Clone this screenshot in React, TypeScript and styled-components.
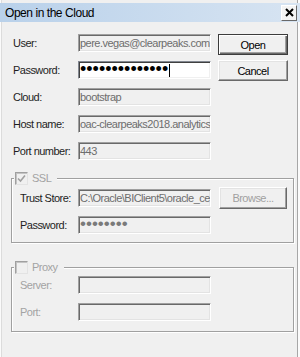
import React from "react";
import styled, { createGlobalStyle } from "styled-components";

const Global = createGlobalStyle`
  html, body { margin: 0; padding: 0; background: #f0f0f0; }
  body { font-family: "Liberation Sans", Arial, sans-serif; }
`;

const Window = styled.div`
  width: 300px;
  height: 357px;
  box-sizing: border-box;
  background: #f0f0f0;
  padding-top: 3px;
  display: flex;
  flex-direction: column;
  box-shadow: inset -2px 0 0 #fbfbfb, inset -3px 0 0 #a7a7a7, inset 1px 0 0 #fbfbfb,
    inset 2px 0 0 #dcdcdc;
  font-size: 11px;
  letter-spacing: -0.52px;
  color: #1e1e1e;
`;

const TitleBar = styled.div`
  height: 19px;
  display: flex;
  align-items: center;
  justify-content: space-between;
  padding: 0 3px 0 5px;
  background: linear-gradient(to right, #b9d1ea, #d7e4f2);
`;

const Title = styled.span`
  font-size: 12px;
  letter-spacing: -0.45px;
  color: #000;
`;

const CloseButton = styled.div`
  width: 16px;
  height: 16px;
  box-sizing: border-box;
  border: 1px solid;
  border-color: #fff #696969 #696969 #fff;
  background: #f4f4f4;
  display: flex;
  align-items: center;
  justify-content: center;
`;

const Body = styled.div`
  display: flex;
  flex-direction: column;
  padding: 12px 6px 0 11px;
`;

const TopSection = styled.div`
  display: flex;
  align-items: flex-start;
  padding-left: 2px;
`;

const Form = styled.div`
  display: grid;
  grid-template-columns: 65px 133px;
  grid-auto-rows: 18px;
  row-gap: 9px;
  align-items: center;
`;

const Label = styled.span<{ $disabled?: boolean }>`
  color: ${(p) => (p.$disabled ? "#a3a3a3" : "#1e1e1e")};
  white-space: nowrap;
`;

const Field = styled.div<{ $active?: boolean }>`
  box-sizing: border-box;
  width: 133px;
  height: 18px;
  border: 1px solid;
  border-color: ${(p) => (p.$active ? "#828790 #fff #fff #828790" : "#a0a0a0 #fff #fff #a0a0a0")};
  box-shadow: ${(p) =>
    p.$active
      ? "inset 1px 1px 0 #404040, inset -1px -1px 0 #f0f0f0"
      : "inset 1px 1px 0 #696969, inset -1px -1px 0 #e3e3e3"};
  background: ${(p) => (p.$active ? "#fff" : "#f0f0f0")};
  color: #6d6d6d;
  padding-left: 1px;
  line-height: 16px;
  white-space: nowrap;
  overflow: hidden;
  display: flex;
  align-items: center;
`;

const Dots = styled.span<{ $size: number; $color: string }>`
  font-size: ${(p) => p.$size}px;
  color: ${(p) => p.$color};
  letter-spacing: 0;
  line-height: 16px;
  height: 16px;
  display: inline-block;
  transform: translateY(-1px);
`;

const Caret = styled.span`
  display: inline-block;
  width: 1px;
  height: 13px;
  background: #000;
  margin-left: 1px;
`;

const ButtonColumn = styled.div`
  display: flex;
  flex-direction: column;
  gap: 5px;
  margin-left: 7px;
`;

const Button = styled.div<{ $default?: boolean; $disabled?: boolean; $w?: number; $h?: number }>`
  box-sizing: border-box;
  width: ${(p) => p.$w ?? 70}px;
  height: ${(p) => p.$h ?? 21}px;
  border: 1px solid;
  border-color: ${(p) => (p.$default ? "#3c3c3c" : "#fff #696969 #696969 #fff")};
  box-shadow: ${(p) =>
    p.$default
      ? "inset 1px 1px 0 #fff, inset -1px -1px 0 #696969, inset -2px -2px 0 #a0a0a0"
      : "inset -1px -1px 0 #a0a0a0, inset 1px 1px 0 #e3e3e3"};
  background: #f0f0f0;
  color: ${(p) => (p.$disabled ? "#a0a0a0" : "#000")};
  display: flex;
  align-items: center;
  justify-content: center;
`;

const Group = styled.div<{ $mt: number; $pt: number; $pb: number; $gap: number }>`
  position: relative;
  margin-top: ${(p) => p.$mt}px;
  border: 1px solid #a0a0a0;
  box-shadow: inset 1px 1px 0 #fff, 1px 1px 0 #fff;
  padding: ${(p) => p.$pt}px 0 ${(p) => p.$pb}px 8px;
  display: grid;
  grid-template-columns: 58px 133px auto;
  row-gap: ${(p) => p.$gap}px;
  align-items: center;
`;

const Legend = styled.div`
  position: absolute;
  top: -8px;
  left: 2px;
  height: 14px;
  padding: 0 6px 0 1px;
  background: #f0f0f0;
  display: flex;
  align-items: center;
  gap: 4px;
  color: #a3a3a3;
`;

const CheckBox = styled.span`
  box-sizing: border-box;
  width: 13px;
  height: 13px;
  border: 1px solid;
  border-color: #a0a0a0 #e3e3e3 #e3e3e3 #a0a0a0;
  box-shadow: inset 1px 1px 0 #c4c4c4;
  background: #f0f0f0;
  display: flex;
  align-items: center;
  justify-content: center;
`;

const BrowseSlot = styled.div`
  margin-left: 8px;
`;

export default function App() {
  return (
    <>
      <Global />
      <Window>
        <TitleBar>
          <Title>Open in the Cloud</Title>
          <CloseButton>
            <svg width="9" height="9" viewBox="0 0 9 9">
              <path d="M1 1 L8 8 M8 1 L1 8" stroke="#000" strokeWidth="2" />
            </svg>
          </CloseButton>
        </TitleBar>
        <Body>
          <TopSection>
            <Form>
              <Label>User:</Label>
              <Field>pere.vegas@clearpeaks.com</Field>
              <Label>Password:</Label>
              <Field $active>
                <Dots $size={18} $color="#000">••••••••••••••</Dots>
                <Caret />
              </Field>
              <Label>Cloud:</Label>
              <Field>bootstrap</Field>
              <Label>Host name:</Label>
              <Field>oac-clearpeaks2018.analytics.ocp</Field>
              <Label>Port number:</Label>
              <Field>443</Field>
            </Form>
            <ButtonColumn>
              <Button $default>Open</Button>
              <Button>Cancel</Button>
            </ButtonColumn>
          </TopSection>

          <Group $mt={18} $pt={8} $pb={8} $gap={7}>
            <Legend>
              <CheckBox>
                <svg width="9" height="9" viewBox="0 0 9 9">
                  <path d="M1 4.5 L3.5 7 L8 1.5" stroke="#a0a0a0" strokeWidth="1.6" fill="none" />
                </svg>
              </CheckBox>
              <span>SSL</span>
            </Legend>
            <Label>Trust Store:</Label>
            <Field>C:\Oracle\BIClient5\oracle_cert</Field>
            <BrowseSlot>
              <Button $disabled $w={68} $h={22}>
                Browse...
              </Button>
            </BrowseSlot>
            <Label>Password:</Label>
            <Field>
              <Dots $size={17} $color="#7a7a7a">••••••••</Dots>
            </Field>
          </Group>

          <Group $mt={24} $pt={8} $pb={10} $gap={9}>
            <Legend>
              <CheckBox />
              <span>Proxy</span>
            </Legend>
            <Label $disabled>Server:</Label>
            <Field />
            <span />
            <Label $disabled>Port:</Label>
            <Field />
            <span />
          </Group>
        </Body>
      </Window>
    </>
  );
}
